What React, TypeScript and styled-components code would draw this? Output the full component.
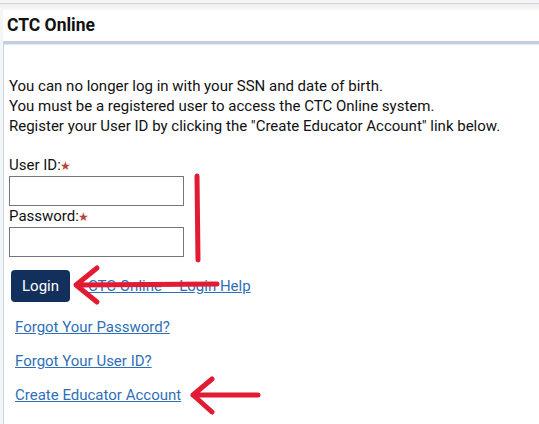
import React from "react";
import styled, { createGlobalStyle } from "styled-components";

const GlobalStyle = createGlobalStyle`
  html, body {
    margin: 0;
    padding: 0;
    background: #f4f5f6;
    font-family: Roboto, "Liberation Sans", Arial, sans-serif;
    color: #111;
  }
`;

const Page = styled.div`
  position: relative;
  width: 539px;
  height: 424px;
  overflow: hidden;
  padding-top: 3px;
  box-sizing: border-box;
`;

const TopStrip = styled.div`
  height: 6px;
  border-top: 1px solid #d4d4d4;
  background: linear-gradient(#eeeeee, #f8f8f8);
`;

const Header = styled.h1`
  margin: 0 0 0 3px;
  height: 31px;
  line-height: 31px;
  padding-left: 4px;
  background: #fff;
  font-size: 17.5px;
  font-weight: 700;
  color: #111;
`;

const Panel = styled.section`
  margin-left: 3px;
  height: 400px;
  background: #fff;
  border-left: 1px solid #c9d5df;
  border-top: 3px solid #c3d0db;
  box-shadow: inset 0 1px 0 #e3eaf0;
  padding: 32px 0 0 5px;
  box-sizing: border-box;
`;

const Intro = styled.p`
  margin: 0;
  font-size: 15px;
  line-height: 20px;
`;

const Label = styled.label<{ $first?: boolean }>`
  display: block;
  font-size: 15px;
  line-height: 19px;
  margin-top: ${(p) => (p.$first ? "20px" : "1px")};
`;

const Star = styled.span`
  color: #b5473a;
  font-size: 12px;
  margin-left: -1px;
`;

const Input = styled.input`
  display: block;
  width: 175px;
  height: 30px;
  box-sizing: border-box;
  border: 1px solid #767676;
  border-radius: 0;
  margin: 0;
`;

const ButtonRow = styled.div`
  display: flex;
  align-items: center;
  gap: 18px;
  margin: 13px 0 0 2px;
`;

const LoginButton = styled.button`
  width: 59px;
  height: 32px;
  border: none;
  border-radius: 4px;
  background: #13305d;
  color: #fff;
  font-family: inherit;
  font-size: 15px;
  padding: 0;
`;

const Link = styled.a`
  color: #2f6fb8;
  font-size: 15px;
  text-decoration: underline;
  cursor: pointer;
`;

const LinkList = styled.div`
  display: flex;
  flex-direction: column;
  gap: 14px;
  margin: 15px 0 0 6px;
  line-height: 20px;
`;

const Marks = styled.svg`
  position: absolute;
  left: 0;
  top: 0;
  pointer-events: none;
`;

const App = () => (
  <>
    <GlobalStyle />
    <Page>
      <TopStrip />
      <Header>CTC Online</Header>
      <Panel>
        <Intro>You can no longer log in with your SSN and date of birth.</Intro>
        <Intro>You must be a registered user to access the CTC Online system.</Intro>
        <Intro>
          Register your User ID by clicking the "Create Educator Account" link
          below.
        </Intro>
        <Label $first>
          User ID:<Star>★</Star>
        </Label>
        <Input type="text" />
        <Label>
          Password:<Star>★</Star>
        </Label>
        <Input type="password" />
        <ButtonRow>
          <LoginButton>Login</LoginButton>
          <Link>CTC Online – Login Help</Link>
        </ButtonRow>
        <LinkList>
          <Link>Forgot Your Password?</Link>
          <Link>Forgot Your User ID?</Link>
          <Link>Create Educator Account</Link>
        </LinkList>
      </Panel>
      <Marks width="539" height="424" viewBox="0 0 539 424">
        <g
          stroke="#e21b33"
          strokeWidth="5"
          strokeLinecap="round"
          strokeLinejoin="round"
          fill="none"
        >
          <path d="M197 176 L198 260" />
          <path d="M217 284 L76 285 M97 268 L76 285 L97 302" />
          <path d="M258 395 L193 395 M212 379 L193 395 L212 412" />
        </g>
      </Marks>
    </Page>
  </>
);

export default App;
